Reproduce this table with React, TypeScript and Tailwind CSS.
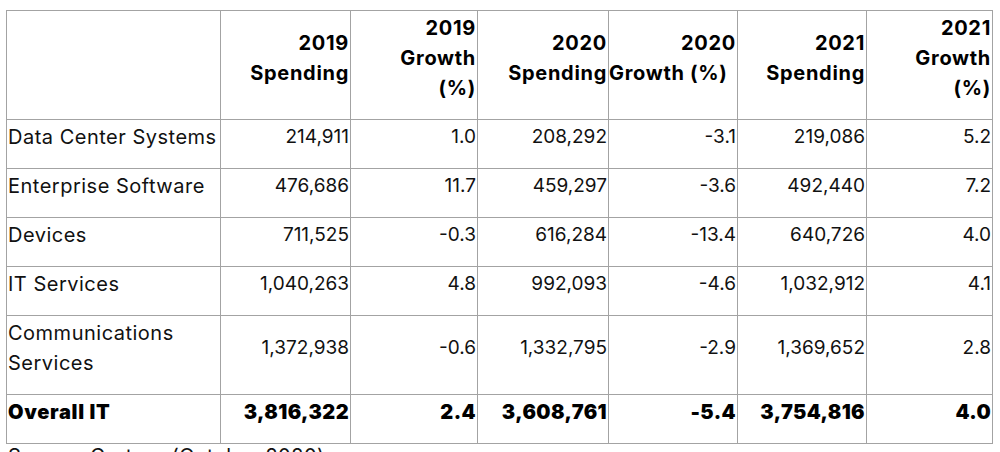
import React from 'react';

type Row = { label: React.ReactNode; values: string[]; bold?: boolean };

const rows: Row[] = [
  { label: 'Data Center Systems', values: ['214,911', '1.0', '208,292', '-3.1', '219,086', '5.2'] },
  { label: 'Enterprise Software', values: ['476,686', '11.7', '459,297', '-3.6', '492,440', '7.2'] },
  { label: 'Devices', values: ['711,525', '-0.3', '616,284', '-13.4', '640,726', '4.0'] },
  { label: 'IT Services', values: ['1,040,263', '4.8', '992,093', '-4.6', '1,032,912', '4.1'] },
  {
    label: (
      <>
        Communications
        <br />
        Services
      </>
    ),
    values: ['1,372,938', '-0.6', '1,332,795', '-2.9', '1,369,652', '2.8'],
  },
  { label: 'Overall IT', values: ['3,816,322', '2.4', '3,608,761', '-5.4', '3,754,816', '4.0'], bold: true },
];

const cell = 'border border-[#a3a3a3] pt-[2px] pb-[16px] leading-[30px] align-middle';

export default function App() {
  return (
    <div className="w-[1000px] h-[452px] overflow-hidden bg-white pt-[10px] pl-[6px] text-[#111] font-['Inter','Liberation_Sans',sans-serif]">
      <table className="table-fixed border-collapse w-[986px] text-[20px]">
        <colgroup>
          <col className="w-[214px]" />
          <col className="w-[130px]" />
          <col className="w-[127px]" />
          <col className="w-[131px]" />
          <col className="w-[129px]" />
          <col className="w-[129px]" />
          <col className="w-[126px]" />
        </colgroup>
        <thead>
          <tr className="font-black text-black tracking-[0.7px]">
            <th className={cell} />
            <th className={`${cell} text-right pr-[1px]`}>
              <div>2019</div>
              <div>Spending</div>
            </th>
            <th className={`${cell} text-right pr-[1px]`}>
              <div>2019</div>
              <div>Growth</div>
              <div>(%)</div>
            </th>
            <th className={`${cell} text-right pr-[1px]`}>
              <div>2020</div>
              <div className="whitespace-nowrap">Spending</div>
            </th>
            <th className={`${cell} text-right pr-[1px]`}>
              <div>2020</div>
              <div className="text-left whitespace-nowrap">Growth (%)</div>
            </th>
            <th className={`${cell} text-right pr-[1px]`}>
              <div>2021</div>
              <div>Spending</div>
            </th>
            <th className={`${cell} text-right pr-[1px]`}>
              <div>2021</div>
              <div>Growth</div>
              <div>(%)</div>
            </th>
          </tr>
        </thead>
        <tbody>
          {rows.map((r, i) => (
            <tr key={i} className={r.bold ? 'font-black text-black' : 'font-normal'}>
              <td className={`${cell} text-left pl-[1px] ${r.bold ? 'tracking-[0.7px]' : 'tracking-[0.5px]'}`}>{r.label}</td>
              {r.values.map((v, j) => (
                <td key={j} className={`${cell} text-right pr-[1px] ${r.bold ? 'tracking-[0.4px]' : 'text-[19px]'}`}>
                  {v}
                </td>
              ))}
            </tr>
          ))}
        </tbody>
      </table>
      <div className="mt-[2px] pl-[2px] text-[20px] leading-[20px] tracking-[0.5px]">Source: Gartner (October 2020)</div>
    </div>
  );
}
